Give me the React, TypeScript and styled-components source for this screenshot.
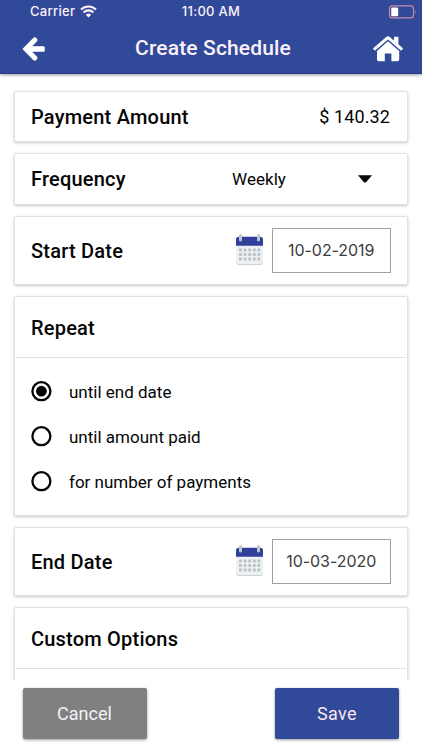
import React, { useState } from "react";
import styled, { createGlobalStyle } from "styled-components";

const GlobalStyle = createGlobalStyle`
  * { box-sizing: border-box; }
  body { margin: 0; background: #fff; font-family: Roboto, "Liberation Sans", sans-serif; color: #050505; overflow: hidden; }
  button { font-family: inherit; }
`;

const Screen = styled.div`
  width: 422px;
  height: 750px;
  display: flex;
  flex-direction: column;
  overflow: hidden;
  background: #fff;
`;

const Header = styled.header`
  height: 74px;
  flex: none;
  background: #314999;
  border-bottom: 1px solid #293b82;
  box-shadow: 0 1px 3px rgba(0, 0, 0, 0.4);
  color: #fdf0fa;
`;

const StatusBar = styled.div`
  height: 23px;
  display: grid;
  grid-template-columns: 1fr auto 1fr;
  align-items: center;
  padding: 0 6px 0 30px;
  font: 500 13px/23px Inter, sans-serif;
`;

const Carrier = styled.div`
  display: flex;
  align-items: center;
  gap: 5px;
  letter-spacing: 0.3px;
`;

const Clock = styled.div`
  margin-left: -12px;
  margin-right: 12px;
  letter-spacing: 0.3px;
`;

const BatterySlot = styled.div`
  display: flex;
  justify-content: flex-end;
`;

const NavBar = styled.div`
  height: 51px;
  display: grid;
  grid-template-columns: 48px 1fr 48px;
  align-items: center;
  padding: 0 10px;
`;

const IconButton = styled.button`
  display: flex;
  justify-content: center;
  border: 0;
  padding: 0;
  background: none;
`;

const Title = styled.h1`
  margin: 0;
  padding-left: 4px;
  text-align: center;
  font-size: 21px;
  line-height: 51px;
  font-weight: 500;
  letter-spacing: 0.15px;
`;

const Content = styled.main`
  flex: 1;
  min-height: 0;
  overflow: hidden;
  padding: 17px 14px 0;
  display: flex;
  flex-direction: column;
  gap: 11px;
`;

const Card = styled.section<{ $height: number }>`
  flex: none;
  height: ${(p) => p.$height}px;
  border: 1px solid #e2e2e2;
  border-radius: 2px;
  box-shadow: 0 1px 3px rgba(0, 0, 0, 0.22);
  background: #fff;
`;

const CardRow = styled.div<{ $height: number; $drop?: number }>`
  height: ${(p) => p.$height}px;
  display: flex;
  align-items: center;
  justify-content: space-between;
  padding: ${(p) => p.$drop ?? 0}px 16px 0;
`;

const Heading = styled.h2`
  margin: 0;
  font-size: 20px;
  line-height: 24px;
  font-weight: 500;
  letter-spacing: 0.21px;
`;

const Amount = styled.div`
  padding-right: 1px;
  line-height: 22px;
  font-size: 18px;
  letter-spacing: 0.1px;
`;

const Select = styled.div`
  width: 159px;
  padding-right: 18px;
  display: flex;
  align-items: center;
  justify-content: space-between;
  font-size: 17px;
  line-height: 20px;
  letter-spacing: 0.05px;
`;

const DateGroup = styled.div`
  display: flex;
  align-items: center;
  gap: 8px;

  svg {
    margin-bottom: 2px;
  }
`;

const DateInput = styled.div`
  width: 119.5px;
  height: 45px;
  border: 1px solid #a0a0a0;
  display: flex;
  align-items: center;
  justify-content: center;
  padding-bottom: 2px;
  font: 400 16px/20px Inter, sans-serif;
  letter-spacing: -0.05px;
  color: #3c3c3c;
`;

const Divider = styled.div`
  height: 1px;
  margin: 0 1px;
  background: #e0e0e0;
`;

const Options = styled.div`
  padding: 11px 16px 0;
`;

const Option = styled.div`
  height: 45px;
  display: flex;
  align-items: center;
  gap: 17px;
  font-size: 17px;
`;

const Radio = styled.svg`
  width: 21px;
  height: 21px;
  flex: none;
`;

const Footer = styled.footer`
  height: 70px;
  flex: none;
  display: flex;
  justify-content: space-between;
  align-items: flex-start;
  padding: 8px 23px 0;
  background: #fff;
`;

const ActionButton = styled.button<{ $primary?: boolean }>`
  width: 124px;
  height: 51px;
  border: 0;
  border-radius: 2px;
  background: ${(p) => (p.$primary ? "#314999" : "#808080")};
  color: ${(p) => (p.$primary ? "#fbe6f1" : "#f2f2f2")};
  box-shadow: 0 1px 3px rgba(0, 0, 0, 0.4);
  font-size: 18px;
  letter-spacing: ${(p) => (p.$primary ? 0.35 : 0.05)}px;
  padding: 0 ${(p) => (p.$primary ? 0 : 1)}px 0 0;
`;

const WifiIcon = () => (
  <svg width="17" height="13" viewBox="0 0 17 13" fill="none" stroke="#fdf0fa" strokeWidth="2.1">
    <path d="M1 4.6a10.7 10.7 0 0 1 15 0" />
    <path d="M3.6 7.4a7 7 0 0 1 9.8 0" />
    <path d="M8.5 12.5 5.9 9.9a3.7 3.7 0 0 1 5.2 0z" fill="#fdf0fa" stroke="none" />
  </svg>
);

const BatteryIcon = () => (
  <svg width="28" height="14" viewBox="0 0 28 14" fill="none">
    <rect x="1.5" y="0.9" width="24" height="12" rx="3" stroke="#c98aa5" strokeWidth="1.1" />
    <rect x="3.2" y="2.6" width="7" height="8.6" rx="1.2" fill="#fff" />
    <path d="M26.9 5q1.6 1.8 0 4z" fill="#c98aa5" />
  </svg>
);

const BackIcon = () => (
  <svg width="24" height="26" viewBox="0 0 24 26" fill="none" stroke="#fff" strokeWidth="5.2">
    <path d="M6 13h14.6" strokeWidth="5.6" />
    <path d="M20 10.2h1.2q1.6 0 1.6 1.6v2.4q0 1.6-1.6 1.6H20z" fill="#fff" stroke="none" />
    <path d="M12.8 4 4 13l8.8 9" strokeLinecap="round" strokeLinejoin="miter" />
  </svg>
);

const HomeIcon = () => (
  <svg width="32" height="26" viewBox="0 0 32 26">
    <path d="M22 .8h4.4v7.4l4.7 4.3-2 2.3L16 3.5 2.9 14.8l-2-2.3L14.2 1.1q1.8-1.5 3.6 0L22 4.7z" fill="#fff" />
    <path d="M16 5.2 27.2 15v8.4q0 1.8-1.8 1.8h-6v-7.7h-6.6v7.7h-6q-1.8 0-1.8-1.8V15z" fill="#fff" />
  </svg>
);

const CalendarIcon = () => (
  <svg width="29" height="34" viewBox="0 0 29 34">
    <path d="M1 9h27v20q0 3-3 3H4q-3 0-3-3z" fill="#ccd4d8" />
    <path d="M1 9h27v19q0 3-3 3H4q-3 0-3-3z" fill="#edf1f4" />
    <path d="M1 12.7V6.5q0-2.8 3-2.8h21q3 0 3 2.8v6.2z" fill="#303f99" />
    {[15.5, 20, 24.5].map((y) =>
      [4, 8.6, 13.2, 17.8, 22.4].map((x) => (
        <rect key={`${x}-${y}`} x={x} y={y} width="2.9" height="2.9" rx="0.4" fill="#bac2c7" />
      ))
    )}
    {[4, 22].map((x) => (
      <rect key={x} x={x} y="1" width="3" height="7.5" rx="1.5" fill="#bfc5cc" />
    ))}
  </svg>
);

const repeatOptions = ["until end date", "until amount paid", "for number of payments"];

const DateCard = ({ label, value }: { label: string; value: string }) => (
  <Card $height={69}>
    <CardRow $height={67}>
      <Heading>{label}</Heading>
      <DateGroup>
        <CalendarIcon />
        <DateInput>{value}</DateInput>
      </DateGroup>
    </CardRow>
  </Card>
);

export default function App() {
  const [selected, setSelected] = useState(0);
  return (
    <>
      <GlobalStyle />
      <Screen>
        <Header>
          <StatusBar>
            <Carrier>
              Carrier <WifiIcon />
            </Carrier>
            <Clock>11:00 AM</Clock>
            <BatterySlot>
              <BatteryIcon />
            </BatterySlot>
          </StatusBar>
          <NavBar>
            <IconButton aria-label="Back">
              <BackIcon />
            </IconButton>
            <Title>Create Schedule</Title>
            <IconButton aria-label="Home">
              <HomeIcon />
            </IconButton>
          </NavBar>
        </Header>
        <Content>
          <Card $height={51}>
            <CardRow $height={50}>
              <Heading>Payment Amount</Heading>
              <Amount>$ 140.32</Amount>
            </CardRow>
          </Card>
          <Card $height={52}>
            <CardRow $height={50}>
              <Heading>Frequency</Heading>
              <Select>
                Weekly
                <svg width="16" height="10" viewBox="0 0 16 10">
                  <path d="M1 1.2h14L9.3 7.9q-1.3 1.4-2.6 0z" fill="#050505" />
                </svg>
              </Select>
            </CardRow>
          </Card>
          <DateCard label="Start Date" value="10-02-2019" />
          <Card $height={220}>
            <CardRow $height={60} $drop={2}>
              <Heading>Repeat</Heading>
            </CardRow>
            <Divider />
            <Options>
              {repeatOptions.map((label, i) => (
                <Option key={label} onClick={() => setSelected(i)}>
                  <Radio viewBox="0 0 21 21">
                    <circle cx="10.4" cy="10.2" r="9" fill="none" stroke="#050505" strokeWidth="2.3" />
                    {selected === i && <circle cx="10.4" cy="10.2" r="5.4" fill="#050505" />}
                  </Radio>
                  {label}
                </Option>
              ))}
            </Options>
          </Card>
          <DateCard label="End Date" value="10-03-2020" />
          <Card $height={120}>
            <CardRow $height={60} $drop={2}>
              <Heading>Custom Options</Heading>
            </CardRow>
            <Divider />
          </Card>
        </Content>
        <Footer>
          <ActionButton>Cancel</ActionButton>
          <ActionButton $primary>Save</ActionButton>
        </Footer>
      </Screen>
    </>
  );
}
